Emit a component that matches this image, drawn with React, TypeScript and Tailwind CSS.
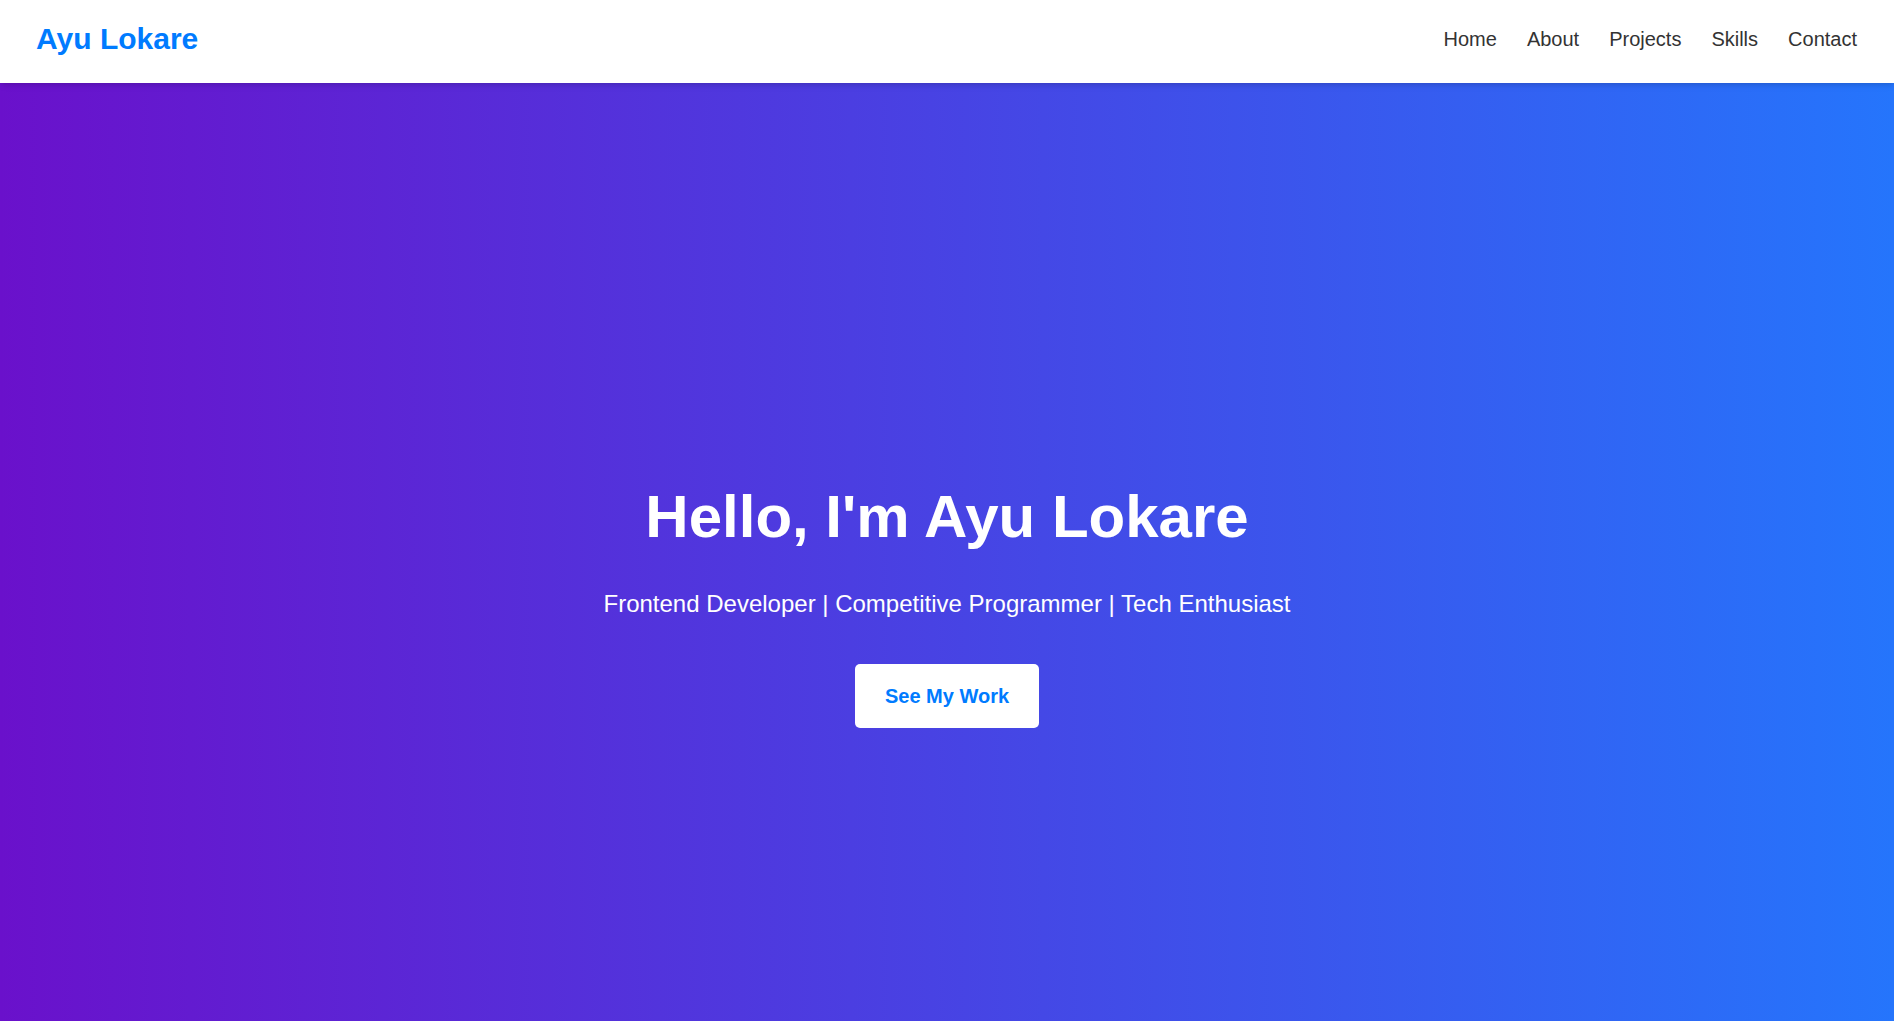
import React from 'react';

const NAV_LINKS = ['Home', 'About', 'Projects', 'Skills', 'Contact'];

const Header: React.FC = () => {
    return (
        <header className="relative z-10 flex h-[83px] shrink-0 items-center justify-between bg-white pb-[6px] pl-9 pr-[37px] shadow-md">
            <a href="#" className="text-[30px] font-bold text-[#007bff]">Ayu Lokare</a>
            <nav className="flex gap-[30px]">
                {NAV_LINKS.map(link => (
                    <a key={link} href="#" className="text-[20px] text-[#333]">{link}</a>
                ))}
            </nav>
        </header>
    );
};

const Hero: React.FC = () => {
    return (
        <section className="flex flex-1 flex-col items-center justify-center bg-[linear-gradient(to_right,#6a11cb,#2575fc)] pt-[104px] text-center text-white">
            <h1 className="text-[60px] font-bold leading-[1.2]">Hello, I'm Ayu Lokare</h1>
            <p className="mt-[33px] text-[24px] leading-[1.5]">Frontend Developer | Competitive Programmer | Tech Enthusiast</p>
            <a
                href="#"
                className="mt-[42px] flex h-[64px] items-center rounded-[5px] bg-white px-[30px] text-[20px] font-bold text-[#007bff]"
            >
                See My Work
            </a>
        </section>
    );
};

export default function App() {
    return (
        <div className="flex h-screen flex-col font-['Liberation_Sans',Arial,sans-serif]">
            <Header />
            <Hero />
        </div>
    );
}
